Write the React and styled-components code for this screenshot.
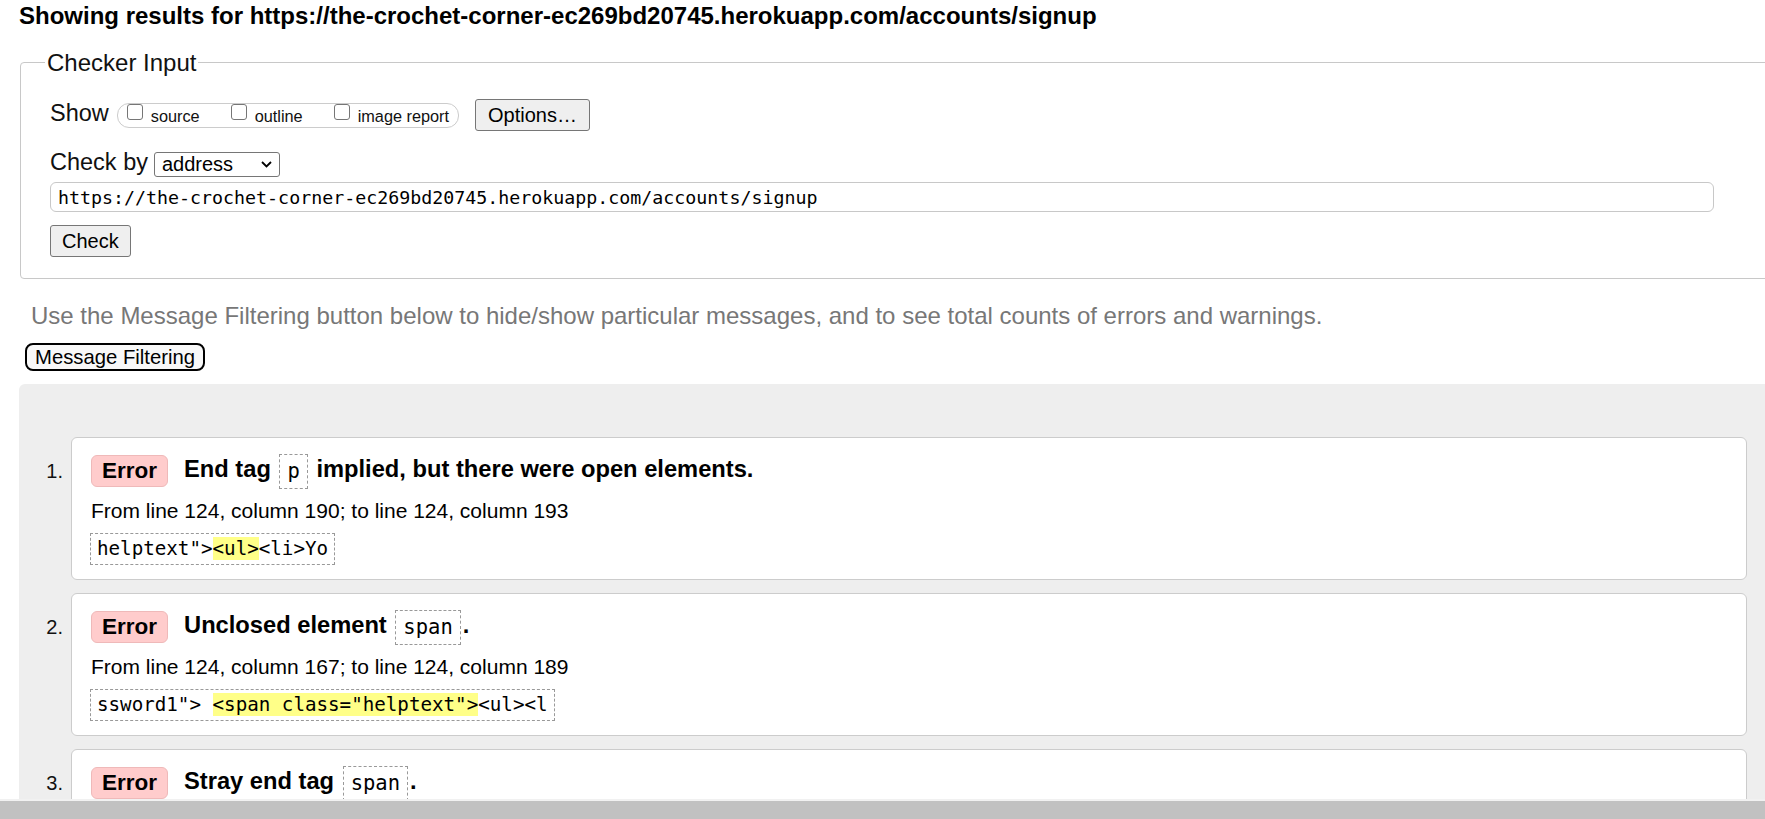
import React from "react";
import styled, { createGlobalStyle } from "styled-components";

const Global = createGlobalStyle`
  html, body { margin: 0; padding: 0; overflow: hidden; background: #fff; }
  body { font-family: "Liberation Sans", Arial, sans-serif; color: #000; }
  * { box-sizing: border-box; }
`;

const Page = styled.div`
  width: 1765px;
  height: 819px;
  overflow: hidden;
  position: relative;
`;

const Heading = styled.h2`
  margin: 0 0 0 19px;
  padding-top: 2px;
  font-size: 24px;
  line-height: 27px;
  font-weight: bold;
  white-space: nowrap;
`;

const Fieldset = styled.fieldset`
  margin: 19.5px 0 0 20px;
  width: 1800px;
  padding: 22.5px 0 21px 29px;
  border: 1px solid #c8c8c8;
  border-radius: 4px;
  min-inline-size: 0;
`;

const Legend = styled.legend`
  font-size: 24px;
  line-height: 28px;
  padding: 0 2px;
  margin-left: -5px;
  color: #111;
`;

const Row = styled.div`
  display: flex;
  align-items: center;
  height: ${(p) => p.$h}px;
  margin-top: ${(p) => p.$mt || 0}px;
`;

const Label = styled.span`
  font-size: 23.5px;
  line-height: 27px;
  margin-right: ${(p) => p.$mr}px;
  margin-bottom: 4px;
  white-space: nowrap;
  color: #111;
`;

const Pill = styled.div`
  display: flex;
  align-items: flex-start;
  gap: 31px;
  height: 25px;
  padding: 0 9px;
  border: 1px solid #ccc;
  border-radius: 12px;
`;

const Option = styled.label`
  display: flex;
  align-items: flex-start;
  gap: 8px;
  font-size: 16.3px;
  line-height: 18px;
  white-space: nowrap;
  color: #111;
`;

const Check = styled.input`
  appearance: none;
  width: 16px;
  height: 16px;
  margin: 0;
  border: 1px solid #767676;
  border-radius: 3px;
  background: #fff;
`;

const OptText = styled.span`
  padding-top: 3px;
`;

const Button = styled.button`
  height: 32px;
  padding: 0 ${(p) => p.$px}px;
  margin-left: ${(p) => p.$ml || 0}px;
  font-family: "Liberation Sans", Arial, sans-serif;
  font-size: 20px;
  line-height: 30px;
  color: #000;
  background: #efefef;
  border: 1px solid #767676;
  border-radius: 3px;
  white-space: nowrap;
`;

const SelectBox = styled.div`
  display: flex;
  align-items: center;
  justify-content: space-between;
  width: 126px;
  height: 25px;
  padding: 0 7px 0 7px;
  border: 1px solid #767676;
  border-radius: 3px;
  font-size: 20px;
  line-height: 23px;
  color: #000;
`;

const UrlInput = styled.input`
  display: block;
  width: 1664px;
  height: 30px;
  margin-top: 5px;
  padding: 0 7px;
  border: 1px solid #c8c8c8;
  border-radius: 6px;
  font-family: "DejaVu Sans Mono", "Liberation Mono", monospace;
  font-size: 18.3px;
  color: #000;
  background: #fff;
  outline: none;
`;

const CheckRow = styled.div`
  margin-top: 13px;
  display: flex;
`;

const Intro = styled.p`
  margin: 23px 0 0 31px;
  font-size: 24px;
  line-height: 27px;
  color: #777;
  white-space: nowrap;
`;

const FilterButton = styled.button`
  display: block;
  margin: 14px 0 0 25px;
  height: 28px;
  padding: 0 8px;
  border: 2px solid #000;
  border-radius: 8px;
  background: #f8f8f8;
  font-family: "Liberation Sans", Arial, sans-serif;
  font-size: 20.3px;
  line-height: 24px;
  color: #000;
`;

const Panel = styled.div`
  margin: 13px 0 0 19px;
  width: 1800px;
  min-height: 600px;
  background: #eee;
  border-radius: 6px 0 0 0;
  padding-top: 53px;
  display: flex;
  flex-direction: column;
  gap: 13px;
`;

const Item = styled.div`
  display: flex;
`;

const Num = styled.div`
  width: 52px;
  padding: 23px 8px 0 0;
  text-align: right;
  font-size: 20px;
  line-height: 22px;
  color: #111;
`;

const Card = styled.div`
  width: 1676px;
  background: #fff;
  border: 1px solid #ccc;
  border-radius: 6px;
  padding: 15px 18px 14px 19px;
`;

const TitleRow = styled.div`
  display: flex;
  align-items: center;
  gap: 16px;
  height: 35px;
`;

const Badge = styled.span`
  height: 32px;
  padding: 0 10px;
  background: #fcc;
  border: 1px solid #efb9b9;
  border-radius: 6px;
  font-weight: bold;
  font-size: 22.5px;
  line-height: 30px;
`;

const Title = styled.span`
  font-weight: bold;
  font-size: 23.7px;
  line-height: 35px;
  white-space: nowrap;
`;

const Code = styled.code`
  display: inline-block;
  margin: 0 2px;
  padding: 5px 7px;
  border: 1px dashed #999;
  font-family: "DejaVu Sans Mono", "Liberation Mono", monospace;
  font-weight: normal;
  font-size: 20.5px;
  line-height: 23px;
  vertical-align: middle;
`;

const Location = styled.p`
  margin: 11px 0 0 0;
  font-size: 21px;
  line-height: 24px;
  white-space: nowrap;
`;

const Extract = styled.p`
  display: inline-block;
  margin: 10px 0 0 -1px;
  padding: 5px 6px;
  border: 1px dashed #999;
  font-family: "DejaVu Sans Mono", "Liberation Mono", monospace;
  font-size: 19.2px;
  line-height: 20px;
  white-space: pre;
`;

const Mark = styled.mark`
  background: #ff8;
  color: inherit;
`;

const ScrollTrack = styled.div`
  position: absolute;
  left: 0;
  right: 0;
  bottom: 0;
  height: 20px;
  background: #f1f1f1;
  padding-top: 2px;
`;

const ScrollThumb = styled.div`
  height: 18px;
  background: #c1c1c1;
`;

const messages = [
  {
    n: 1,
    before: "End tag",
    code: "p",
    after: "implied, but there were open elements.",
    loc: "From line 124, column 190; to line 124, column 193",
    ex: ['helptext">', "<ul>", "<li>Yo"],
  },
  {
    n: 2,
    before: "Unclosed element",
    code: "span",
    after: ".",
    loc: "From line 124, column 167; to line 124, column 189",
    ex: ['ssword1"> ', '<span class="helptext">', "<ul><l"],
  },
  {
    n: 3,
    before: "Stray end tag",
    code: "span",
    after: ".",
    loc: "From line 124, column 194; to line 124, column 200",
    ex: ["ul></span>", "</span>", "</div"],
  },
];

function Chevron() {
  return (
    <svg width="11" height="7" viewBox="0 0 11 7">
      <path d="M1 1l4.5 4.5L10 1" fill="none" stroke="#000" strokeWidth="1.8" />
    </svg>
  );
}

export default function App() {
  return (
    <Page>
      <Global />
      <Heading>
        Showing results for https://the-crochet-corner-ec269bd20745.herokuapp.com/accounts/signup
      </Heading>
      <Fieldset>
        <Legend>Checker Input</Legend>
        <Row $h={32}>
          <Label $mr={8}>Show</Label>
          <Pill>
            <Option>
              <Check type="checkbox" />
              <OptText>source</OptText>
            </Option>
            <Option>
              <Check type="checkbox" />
              <OptText>outline</OptText>
            </Option>
            <Option>
              <Check type="checkbox" />
              <OptText>image report</OptText>
            </Option>
          </Pill>
          <Button $px={12} $ml={16}>Options…</Button>
        </Row>
        <Row $h={25} $mt={21}>
          <Label $mr={6}>Check by</Label>
          <SelectBox>
            <span>address</span>
            <Chevron />
          </SelectBox>
        </Row>
        <UrlInput
          readOnly
          value="https://the-crochet-corner-ec269bd20745.herokuapp.com/accounts/signup"
        />
        <CheckRow>
          <Button $px={11}>Check</Button>
        </CheckRow>
      </Fieldset>
      <Intro>
        Use the Message Filtering button below to hide/show particular messages, and to see total counts of errors and warnings.
      </Intro>
      <FilterButton>Message Filtering</FilterButton>
      <Panel>
        {messages.map((m) => (
          <Item key={m.n}>
            <Num>{m.n}.</Num>
            <Card>
              <TitleRow>
                <Badge>Error</Badge>
                <Title>
                  {m.before} <Code>{m.code}</Code>
                  {m.after === "." ? "." : " " + m.after}
                </Title>
              </TitleRow>
              <Location>{m.loc}</Location>
              <Extract>
                {m.ex[0]}
                <Mark>{m.ex[1]}</Mark>
                {m.ex[2]}
              </Extract>
            </Card>
          </Item>
        ))}
      </Panel>
      <ScrollTrack>
        <ScrollThumb />
      </ScrollTrack>
    </Page>
  );
}
